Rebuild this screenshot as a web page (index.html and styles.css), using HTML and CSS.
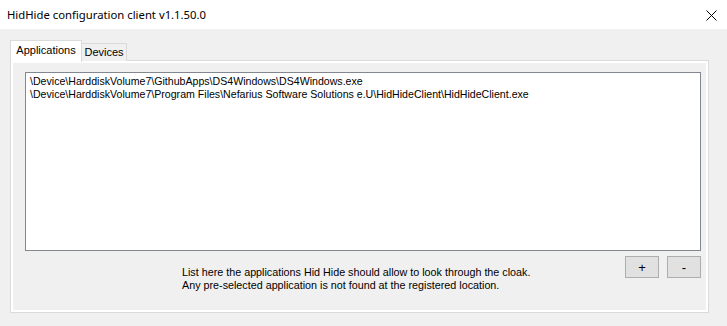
FILE: index.html
```html
<!DOCTYPE html>
<html>
<head>
  <meta charset="utf-8">
  <link rel="stylesheet" href="styles.css">
</head>
<body>
  <div class="window">
    <div class="titlebar">
      <div class="title">HidHide configuration client v1.1.50.0</div>
      <div class="close">
        <svg width="11" height="11" viewBox="0 0 11 11">
          <path d="M0.5 0.5 L10.5 10.5 M10.5 0.5 L0.5 10.5" stroke="#000" stroke-width="1" fill="none"/>
        </svg>
      </div>
    </div>

    <div class="client">
      <div class="tabs">
        <div class="tab active">Applications</div>
        <div class="tab">Devices</div>
      </div>

      <div class="panel">
        <div class="app-list">
          <div class="app-item">\Device\HarddiskVolume7\GithubApps\DS4Windows\DS4Windows.exe</div>
          <div class="app-item">\Device\HarddiskVolume7\Program Files\Nefarius Software Solutions e.U\HidHideClient\HidHideClient.exe</div>
        </div>

        <div class="footer">
          <div class="hint">
            List here the applications Hid Hide should allow to look through the cloak.<br>
            Any pre-selected application is not found at the registered location.
          </div>
          <div class="buttons">
            <button class="btn">+</button>
            <button class="btn">-</button>
          </div>
        </div>
      </div>
    </div>
  </div>
</body>
</html>
```

FILE: styles.css
```css
* {
  margin: 0;
  padding: 0;
  box-sizing: border-box;
}

body {
  width: 727px;
  height: 326px;
  background: #f0f0f0;
  font-family: 'Liberation Sans', Arial, sans-serif;
  font-size: 10.6px;
  color: #000;
  overflow: hidden;
}

.titlebar {
  height: 29px;
  background: #fff;
  display: flex;
  align-items: center;
  justify-content: space-between;
  padding: 0 10px 0 7px;
}

.title {
  font-family: 'Noto Sans', 'Open Sans', sans-serif;
  font-size: 11.3px;
  color: #000;
}

.close {
  width: 11px;
  height: 11px;
  display: flex;
  margin-top: 1px;
}

.client {
  padding: 11px 0 0 10px;
}

.tabs {
  display: flex;
  align-items: flex-end;
  height: 21px;
  position: relative;
  z-index: 1;
}

.tab {
  height: 18px;
  width: 45px;
  text-align: center;
  border: 1px solid #dadada;
  border-left: none;
  border-bottom: none;
  background: #f0f0f0;
  line-height: 17px;
  font-size: 11px;
}

.tab.active {
  width: 72px;
  height: 22px;
  border-left: 1px solid #dadada;
  border-right: 1px solid #dadada;
  background: #fff;
  line-height: 19px;
  margin-bottom: -1px;
}

.panel {
  width: 699px;
  height: 253px;
  margin-top: -1px;
  border: 1px solid #dadada;
  box-shadow: inset 0 0 0 2px #fff;
  padding: 11px 7px 0 14px;
  display: flex;
  flex-direction: column;
}

.app-list {
  height: 179px;
  background: #fff;
  border: 1px solid #828790;
  padding: 2px 4px;
}

.app-item {
  line-height: 13px;
  white-space: nowrap;
}

.footer {
  display: flex;
  align-items: flex-start;
}

.hint {
  margin: 15px 0 0 157px;
  line-height: 13px;
  font-size: 10.75px;
}

.buttons {
  margin: 5px 0 0 auto;
  display: flex;
  gap: 8px;
}

.btn {
  width: 34px;
  height: 22px;
  background: #e1e1e1;
  border: 1px solid #adadad;
  font-family: 'Liberation Sans', Arial, sans-serif;
  font-size: 13px;
  color: #000;
}
```
